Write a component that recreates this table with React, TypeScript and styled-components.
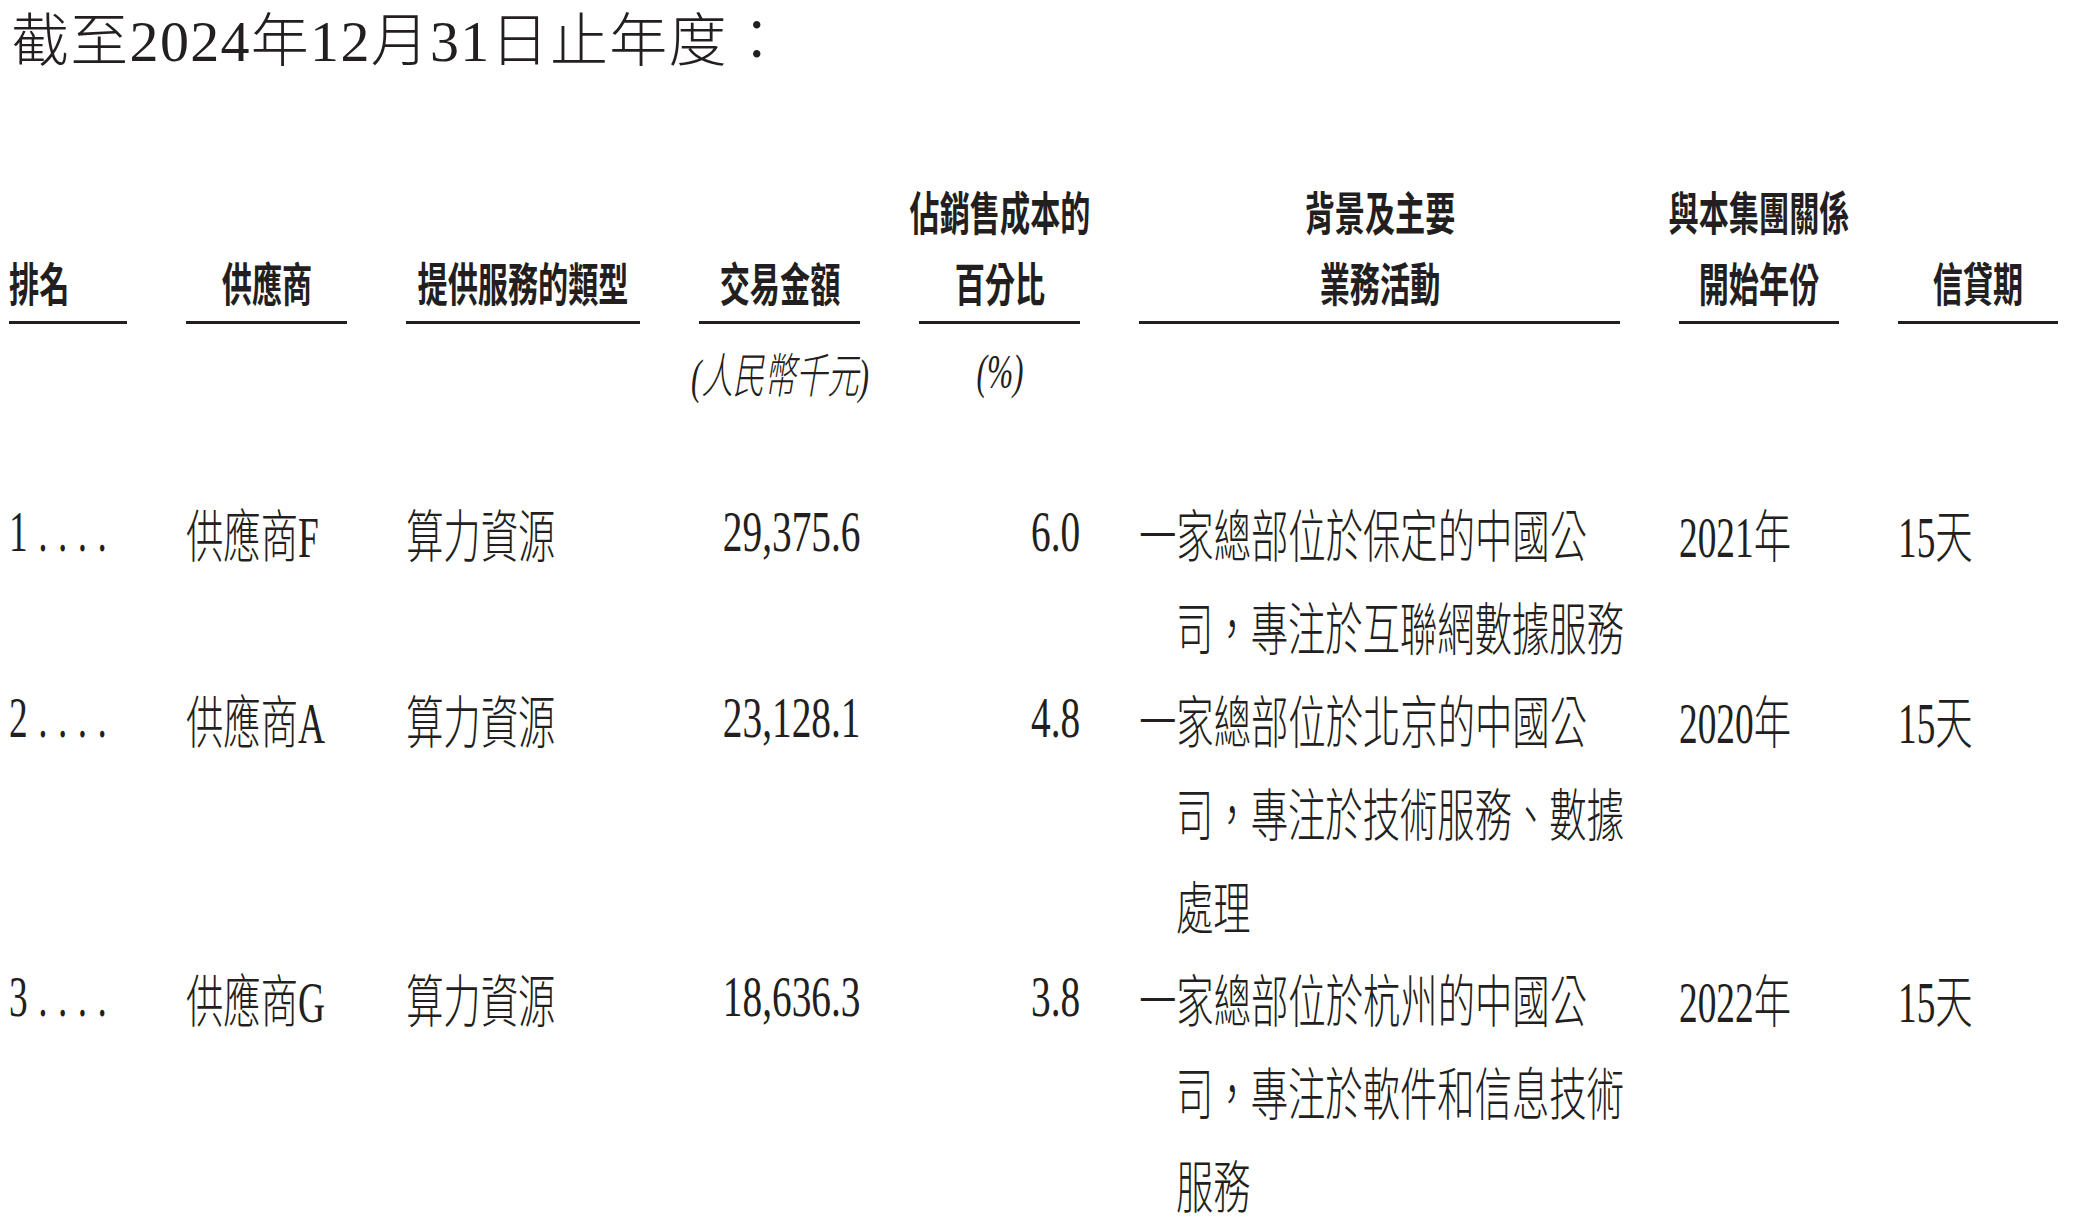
import React from "react";
import styled, { createGlobalStyle } from "styled-components";

const INK = "#231f20";
const COLS = "118px 161px 234px 161px 161px 481px 160px 160px";
const GAP = "59px";

type Align = "start" | "center" | "end";
const justify = (a: Align) => (a === "start" ? "flex-start" : a === "center" ? "center" : "flex-end");
const origin = (a: Align) => (a === "start" ? "left" : a === "center" ? "center" : "right");

const Global = createGlobalStyle`
  html, body { margin: 0; padding: 0; background: #ffffff; }
  body {
    color: ${INK};
    font-family: "Liberation Serif", "Noto Sans CJK TC", serif;
  }
`;

const Page = styled.main`
  width: 2074px;
  box-sizing: border-box;
  padding-left: 9px;
  overflow: hidden;
`;

const Title = styled.h1`
  margin: 0;
  padding-left: 2px;
  font-family: "Liberation Serif", "Noto Sans CJK TC", serif;
  font-weight: 300;
  font-size: 58px;
  line-height: 84px;
  letter-spacing: 1.3px;
  white-space: nowrap;
`;

const Squeeze = styled.span<{ $align: Align; $k?: number }>`
  display: inline-block;
  flex: none;
  white-space: pre;
  transform: scaleX(${(p) => p.$k ?? 0.655});
  transform-origin: ${(p) => origin(p.$align)} center;
`;

const Grid = styled.div`
  display: grid;
  grid-template-columns: ${COLS};
  column-gap: ${GAP};
`;

const HeadGrid = styled(Grid)`
  margin-top: 90px;
  font-family: "Noto Sans CJK TC", sans-serif;
  font-weight: 700;
  font-size: 46px;
`;

const HeadCell = styled.div`
  display: flex;
  flex-direction: column;
  justify-content: flex-end;
  padding-bottom: 5px;
  border-bottom: 3px solid ${INK};
`;

const HeadLine = styled.div<{ $align: Align }>`
  height: 71px;
  display: flex;
  align-items: center;
  justify-content: ${(p) => justify(p.$align)};
`;

const UnitGrid = styled(Grid)`
  margin-top: 12px;
  font-family: "Liberation Serif", "Noto Sans CJK TC", serif;
  font-style: italic;
  font-weight: 300;
  font-size: 48px;
`;

const UnitCell = styled.div`
  height: 71px;
  display: flex;
  align-items: center;
  justify-content: center;
`;

const Body = styled.div`
  margin-top: 78px;
  display: flex;
  flex-direction: column;
  font-family: "Liberation Serif", "Noto Sans CJK TC", serif;
  font-weight: 300;
  font-size: 57px;
`;

const Row = styled(Grid)`
  align-items: start;
`;

const Cell = styled.div`
  display: flex;
  flex-direction: column;
  min-width: 0;
`;

const Line = styled.div<{ $align: Align; $indent?: boolean }>`
  height: 93px;
  display: flex;
  align-items: center;
  justify-content: ${(p) => justify(p.$align)};
  padding-left: ${(p) => (p.$indent ? "37px" : "0")};
`;

const Rank = styled(Squeeze)`
  letter-spacing: 16px;
`;

type Head = { top?: string; main: string; align: Align };
const heads: Head[] = [
  { main: "排名", align: "start" },
  { main: "供應商", align: "center" },
  { main: "提供服務的類型", align: "center" },
  { main: "交易金額", align: "center" },
  { top: "佔銷售成本的", main: "百分比", align: "center" },
  { top: "背景及主要", main: "業務活動", align: "center" },
  { top: "與本集團關係", main: "開始年份", align: "center" },
  { main: "信貸期", align: "center" },
];

type Supplier = {
  rank: string;
  name: string;
  type: string;
  amount: string;
  pct: string;
  desc: string[];
  year: string;
  credit: string;
};

const rows: Supplier[] = [
  {
    rank: "1....",
    name: "供應商F",
    type: "算力資源",
    amount: "29,375.6",
    pct: "6.0",
    desc: ["一家總部位於保定的中國公", "司，專注於互聯網數據服務"],
    year: "2021年",
    credit: "15天",
  },
  {
    rank: "2....",
    name: "供應商A",
    type: "算力資源",
    amount: "23,128.1",
    pct: "4.8",
    desc: ["一家總部位於北京的中國公", "司，專注於技術服務、數據", "處理"],
    year: "2020年",
    credit: "15天",
  },
  {
    rank: "3....",
    name: "供應商G",
    type: "算力資源",
    amount: "18,636.3",
    pct: "3.8",
    desc: ["一家總部位於杭州的中國公", "司，專注於軟件和信息技術", "服務"],
    year: "2022年",
    credit: "15天",
  },
];

const Text = ({ children, align, k }: { children: React.ReactNode; align: Align; k?: number }) => (
  <Squeeze $align={align} $k={k}>
    {children}
  </Squeeze>
);

export default function App() {
  return (
    <>
      <Global />
      <Page>
        <Title>截至2024年12月31日止年度：</Title>

        <HeadGrid>
          {heads.map((h) => (
            <HeadCell key={h.main}>
              {h.top && (
                <HeadLine $align={h.align}>
                  <Text align={h.align}>{h.top}</Text>
                </HeadLine>
              )}
              <HeadLine $align={h.align}>
                <Text align={h.align}>{h.main}</Text>
              </HeadLine>
            </HeadCell>
          ))}
        </HeadGrid>

        <UnitGrid>
          <div />
          <div />
          <div />
          <UnitCell>
            <Text align="center">(人民幣千元)</Text>
          </UnitCell>
          <UnitCell>
            <Text align="center">(%)</Text>
          </UnitCell>
        </UnitGrid>

        <Body>
          {rows.map((r) => (
            <Row key={r.rank}>
              <Cell>
                <Line $align="start">
                  <Rank $align="start">{r.rank}</Rank>
                </Line>
              </Cell>
              <Cell>
                <Line $align="start">
                  <Text align="start">{r.name}</Text>
                </Line>
              </Cell>
              <Cell>
                <Line $align="start">
                  <Text align="start">{r.type}</Text>
                </Line>
              </Cell>
              <Cell>
                <Line $align="end">
                  <Text align="end" k={0.69}>{r.amount}</Text>
                </Line>
              </Cell>
              <Cell>
                <Line $align="end">
                  <Text align="end" k={0.69}>{r.pct}</Text>
                </Line>
              </Cell>
              <Cell>
                {r.desc.map((d, i) => (
                  <Line key={d} $align="start" $indent={i > 0}>
                    <Text align="start">{d}</Text>
                  </Line>
                ))}
              </Cell>
              <Cell>
                <Line $align="start">
                  <Text align="start">{r.year}</Text>
                </Line>
              </Cell>
              <Cell>
                <Line $align="start">
                  <Text align="start">{r.credit}</Text>
                </Line>
              </Cell>
            </Row>
          ))}
        </Body>
      </Page>
    </>
  );
}
